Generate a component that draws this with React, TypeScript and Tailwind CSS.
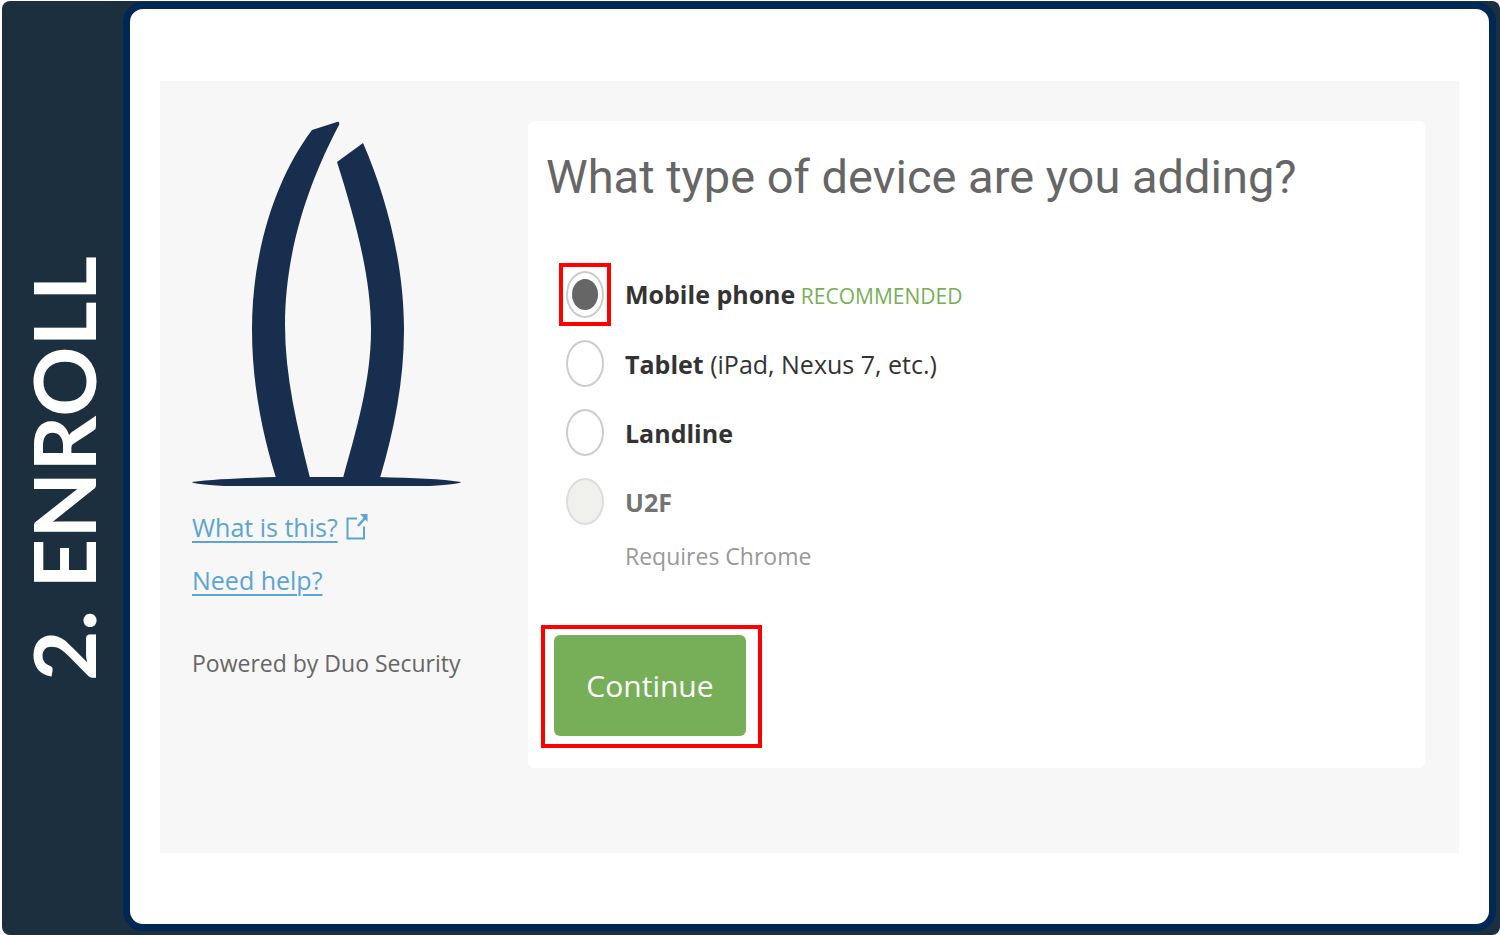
import React, { useState } from "react";

type Device = {
  id: string;
  name: string;
  note?: string;
  tag?: string;
  disabled?: boolean;
};

const devices: Device[] = [
  { id: "mobile", name: "Mobile phone", tag: "RECOMMENDED" },
  { id: "tablet", name: "Tablet", note: "(iPad, Nexus 7, etc.)" },
  { id: "landline", name: "Landline" },
  { id: "u2f", name: "U2F", disabled: true },
];

function Logo() {
  return (
    <svg
      viewBox="0 0 270 366"
      className="h-[366px] w-[270px]"
      fill="#172e4f"
      role="img"
      aria-label="Organization logo"
    >
      <path d="M120 9 L145 1 Q148 0 147 4 C120 55 93 125 93 204 C93 255 105 305 118 357 L84 357 C70 312 60 262 60 208 C60 132 83 58 120 9Z" />
      <path d="M145 41 L171 22 C193 72 212 140 212 209 C212 260 202 310 188 357 L151 357 C164 310 179 260 179 209 C179 155 163 98 145 41Z" />
      <path d="M0 361 C20 358 52 357 85 356 L186 356 C222 357 250 358 269 361 Q269 363 238 365 L32 365 Q0 363 0 361Z" />
    </svg>
  );
}

function ExternalIcon() {
  return (
    <svg viewBox="0 0 22 27" className="h-[27px] w-[22px]" fill="none" stroke="#5ba4d4" strokeWidth="2" aria-hidden="true">
      <path d="M11 4.500H1.500V24.500H18V12.500" />
      <path d="M12 12L19 4" strokeWidth="2.6" />
      <path d="M14 0H21.500V8Z" fill="#5ba4d4" stroke="none" />
    </svg>
  );
}

export default function App() {
  const [selected, setSelected] = useState("mobile");

  return (
    <div className="flex min-h-screen bg-white pl-[2px] pt-px font-['Open_Sans','Noto_Sans',sans-serif]">
      <div className="flex flex-1 rounded-lg bg-[#1c2f3f] pb-1 pr-1 pt-px">
        <div className="flex w-[121px] shrink-0 items-center justify-center pt-1">
          <h2 className="rotate-180 whitespace-nowrap font-['Lato',sans-serif] text-[87px] font-bold leading-[104px] text-white [writing-mode:vertical-rl]">
            2. ENROLL
          </h2>
        </div>

        <div className="flex flex-1 flex-col rounded-[20px] border-[7px] border-[#002855] bg-white px-[30px] pb-[71px] pt-[72px]">
          <div className="flex flex-1 bg-[#f7f7f7] pb-[85px] pl-8 pr-[34px] pt-10">
            <aside className="w-[336px] shrink-0">
              <Logo />
              <nav className="mt-[14px] text-[25px] leading-[53px] text-[#5ba4d4]">
                <div className="flex items-center gap-2">
                  <a href="#about" className="underline decoration-2 underline-offset-4">
                    What is this?
                  </a>
                  <ExternalIcon />
                </div>
                <a href="#help" className="underline decoration-2 underline-offset-4">
                  Need help?
                </a>
              </nav>
              <p className="mt-[30px] text-[23px] leading-[53px] text-[#666666]">
                Powered by Duo Security
              </p>
            </aside>

            <main className="flex-1 rounded-md bg-white px-[18px] pb-[19px] pt-5">
              <h1 className="font-['Roboto',sans-serif] text-[47px] leading-[72px] text-[#666666]">
                What type of device are you adding?
              </h1>

              <form className="mt-[50px]" onSubmit={(e) => e.preventDefault()}>
                <div className="ml-[13px] flex flex-col gap-[6px]">
                  {devices.map((d) => (
                    <div key={d.id} className="flex items-center gap-[14px]">
                      <span
                        className={
                          d.id === "mobile"
                            ? "flex h-[63px] w-[52px] items-center justify-center border-4 border-[#ff0000]"
                            : "flex h-[63px] w-[52px] items-center justify-center"
                        }
                      >
                        <input
                          type="radio"
                          name="device"
                          id={d.id}
                          disabled={d.disabled}
                          checked={selected === d.id}
                          onChange={() => setSelected(d.id)}
                          className="h-[47px] w-[38px] shrink-0 appearance-none rounded-[50%] border-2 border-[#cccccc] bg-white bg-clip-content px-1 py-[6px] checked:bg-[#666666] disabled:border-[#dddddd] disabled:bg-[#f0f1ec] disabled:bg-clip-border"
                        />
                      </span>
                      <label
                        htmlFor={d.id}
                        className={
                          d.disabled
                            ? "text-[25px] leading-10 text-[#737373]"
                            : "text-[25px] leading-10 text-[#333333]"
                        }
                      >
                        <strong className="font-bold">{d.name}</strong>
                        {d.tag && <span className="text-[21px] text-[#77af58]"> {d.tag}</span>}
                        {d.note && <span> {d.note}</span>}
                      </label>
                    </div>
                  ))}
                </div>
                <p className="ml-[79px] mt-[3px] text-[23px] leading-10 text-[#999999]">Requires Chrome</p>

                <div className="-ml-[5px] mt-[49px] w-fit border-4 border-[#ff0000] pb-2 pl-[9px] pr-3 pt-[6px]">
                  <button
                    type="submit"
                    className="h-[101px] w-[192px] rounded-md bg-[#77af58] text-[30px] text-white"
                  >
                    Continue
                  </button>
                </div>
              </form>
            </main>
          </div>
        </div>
      </div>
    </div>
  );
}
